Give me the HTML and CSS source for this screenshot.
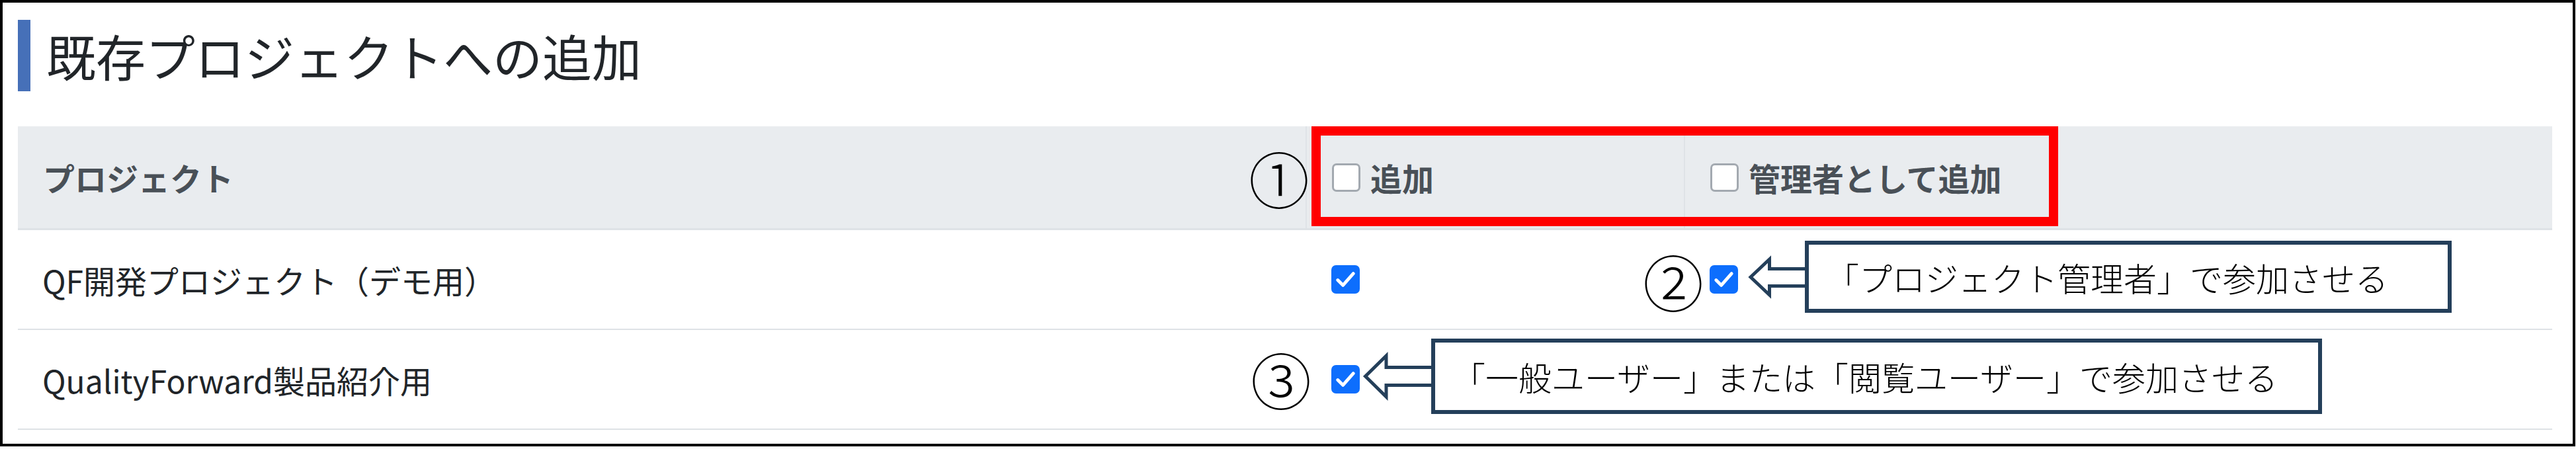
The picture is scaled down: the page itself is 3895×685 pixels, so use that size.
FILE: index.html
```html
<!DOCTYPE html>
<html lang="ja">
  <head>
    <meta charset="UTF-8" />
    <meta name="viewport" content="width=device-width, initial-scale=1.0" />
    <title>既存プロジェクトへの追加</title>
    <link rel="stylesheet" href="styles.css">
  </head>
  <body>
    <div class="frame">
      <h1 class="title">既存プロジェクトへの追加</h1>

      <table class="projects">
        <colgroup>
          <col class="col-name" />
          <col class="col-add" />
          <col class="col-admin" />
        </colgroup>
        <thead>
          <tr>
            <th>プロジェクト</th>
            <th>
              <span class="head-check"><span class="box"></span>追加</span>
            </th>
            <th>
              <span class="head-check"><span class="box"></span>管理者として追加</span>
            </th>
          </tr>
        </thead>
        <tbody>
          <tr>
            <td>QF開発プロジェクト（デモ用）</td>
            <td>
              <span class="box on">
                <svg viewBox="0 0 44 44"><path d="M10 23 L18 31 L34 13" /></svg>
              </span>
            </td>
            <td>
              <span class="box on">
                <svg viewBox="0 0 44 44"><path d="M10 23 L18 31 L34 13" /></svg>
              </span>
            </td>
          </tr>
          <tr>
            <td>QualityForward製品紹介用</td>
            <td>
              <span class="box on">
                <svg viewBox="0 0 44 44"><path d="M10 23 L18 31 L34 13" /></svg>
              </span>
            </td>
            <td></td>
          </tr>
        </tbody>
      </table>

      <!-- 説明用の注記 -->
      <div class="highlight"></div>
      <span class="num num-1">①</span>
      <span class="num num-2">②</span>
      <span class="num num-3">③</span>

      <div class="callout callout-1">
        <svg class="arrow" width="95" height="70" viewBox="0 0 95 70">
          <path d="M100 22.5 H35.5 V8 L7 35 L35.5 62 V48.5 H100" />
        </svg>
        <div class="note">「プロジェクト管理者」で参加させる</div>
      </div>

      <div class="callout callout-2">
        <svg class="arrow" width="114" height="74" viewBox="0 0 114 74">
          <path d="M120 23.5 H40 V6 L8.5 37 L40 68 V50.5 H120" />
        </svg>
        <div class="note">「一般ユーザー」または「閲覧ユーザー」で参加させる</div>
      </div>
    </div>
  </body>
</html>
```

FILE: styles.css
```css
body {
  margin: 0;
  background: #fff;
  font-family: "Noto Sans CJK JP", "Noto Sans", sans-serif;
  color: #212529;
}

.frame {
  position: relative;
  width: 3894px;
  box-sizing: border-box;
  border: 4px solid #000;
  padding: 26px 31px 21px 23px;
}

.title {
  margin: 0;
  height: 108px;
  border-left: 19px solid #4670b8;
  padding-left: 24px;
  font-size: 75px;
  font-weight: 400;
  line-height: 108px;
  color: #212529;
}

.projects {
  width: 100%;
  margin-top: 53px;
  border-collapse: collapse;
  table-layout: fixed;
  font-size: 48px;
}

.col-name {
  width: 1948px;
}

.col-add {
  width: 572px;
}

.projects th {
  height: 154px;
  padding: 0 38px;
  background: #e9ecef;
  border-bottom: 3px solid #dee2e6;
  text-align: left;
  font-weight: 700;
  color: #495057;
}

.projects th + th {
  border-left: 2px solid #dfe3e7;
}

.projects td {
  height: 149px;
  padding: 0 37px;
  border-bottom: 2px solid #dee2e6;
  vertical-align: middle;
}

.projects td + td {
  padding-left: 38px;
}

.head-check {
  display: flex;
  align-items: center;
  gap: 15px;
}

.box {
  display: block;
  width: 43px;
  height: 43px;
  box-sizing: border-box;
  border: 3px solid #a3a9b0;
  border-radius: 7px;
  background: #fff;
}

.box.on {
  border: none;
  background: #0d6efd;
}

.box svg {
  display: block;
  width: 43px;
  height: 43px;
}

.box path {
  fill: none;
  stroke: #fff;
  stroke-width: 5;
  stroke-linecap: round;
  stroke-linejoin: round;
}

/* 注記レイヤー */
.highlight {
  position: absolute;
  left: 1979px;
  top: 187px;
  width: 1129px;
  height: 151px;
  box-sizing: border-box;
  border: 14px solid #ff0000;
}

.num {
  position: absolute;
  width: 100px;
  height: 100px;
  display: flex;
  align-items: center;
  justify-content: center;
  font-size: 92px;
  font-weight: 300;
  line-height: 1;
  color: #000;
}

.num-1 {
  left: 1880px;
  top: 214px;
}

.num-2 {
  left: 2476px;
  top: 370px;
}

.num-3 {
  left: 1883px;
  top: 518px;
}

.callout {
  position: absolute;
  display: flex;
  align-items: center;
}

.callout-1 {
  left: 2636px;
  top: 360px;
}

.callout-2 {
  left: 2052px;
  top: 508px;
}

.arrow {
  display: block;
  margin-right: -6px;
}

.arrow path {
  fill: #fff;
  stroke: #243f5a;
  stroke-width: 5;
  stroke-linejoin: miter;
}

.note {
  position: relative;
  display: flex;
  align-items: center;
  box-sizing: border-box;
  border: 6px solid #243f5a;
  background: #fff;
  padding-left: 26px;
  font-size: 50px;
  font-weight: 300;
  line-height: 1;
  color: #000;
}

.callout-1 .note {
  width: 978px;
  height: 109px;
}

.callout-2 .note {
  width: 1347px;
  height: 114px;
}
```
